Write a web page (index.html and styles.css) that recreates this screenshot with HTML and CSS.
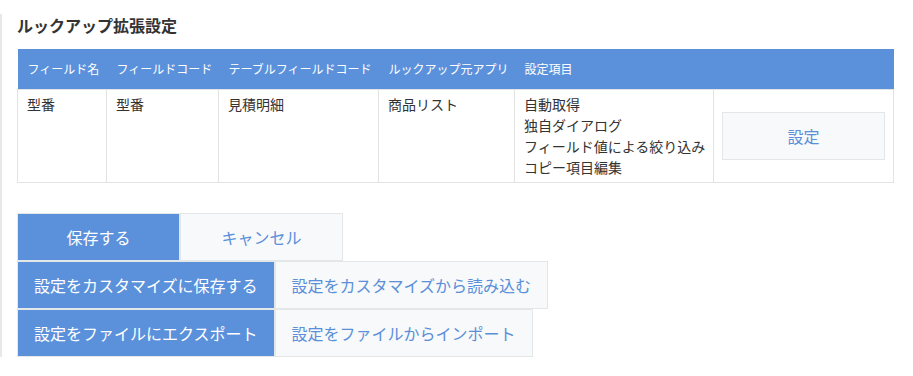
FILE: index.html
```html
<!DOCTYPE html>
<html lang="ja">
<head>
    <meta charset="UTF-8">
    <title>ルックアップ拡張設定</title>
    <link rel="stylesheet" href="styles.css">
</head>
<body>
    <div class="wrapper">
        <h2 class="title">ルックアップ拡張設定</h2>

        <table class="lookup-table">
            <thead>
                <tr>
                    <th class="col-name">フィールド名</th>
                    <th class="col-code">フィールドコード</th>
                    <th class="col-table">テーブルフィールドコード</th>
                    <th class="col-app">ルックアップ元アプリ</th>
                    <th class="col-items">設定項目</th>
                    <th class="col-action"></th>
                </tr>
            </thead>
            <tbody>
                <tr>
                    <td>型番</td>
                    <td>型番</td>
                    <td>見積明細</td>
                    <td>商品リスト</td>
                    <td>
                        <div>自動取得</div>
                        <div>独自ダイアログ</div>
                        <div>フィールド値による絞り込み</div>
                        <div>コピー項目編集</div>
                    </td>
                    <td class="cell-action">
                        <button class="btn-setting">設定</button>
                    </td>
                </tr>
            </tbody>
        </table>

        <div class="actions">
            <div class="btn-row">
                <button class="btn btn-primary">保存する</button>
                <button class="btn btn-normal">キャンセル</button>
            </div>
            <div class="btn-row">
                <button class="btn btn-primary">設定をカスタマイズに保存する</button>
                <button class="btn btn-normal">設定をカスタマイズから読み込む</button>
            </div>
            <div class="btn-row">
                <button class="btn btn-primary">設定をファイルにエクスポート</button>
                <button class="btn btn-normal">設定をファイルからインポート</button>
            </div>
        </div>
    </div>
</body>
</html>
```

FILE: styles.css
```css
* {
    box-sizing: border-box;
}

body {
    margin: 0;
    background-color: #ffffff;
    color: #333333;
    font-family: "Noto Sans CJK JP", "Noto Sans", sans-serif;
}

.wrapper {
    margin-top: 14px;
    border-left: 2px solid #e8e8e8;
    padding-left: 15px;
    width: 896px;
}

.title {
    margin: 0 0 14px;
    padding-top: 2px;
    font-size: 16px;
    line-height: 19px;
    font-weight: bold;
}

.lookup-table {
    width: 876px;
    border-collapse: collapse;
    table-layout: fixed;
}

.lookup-table th {
    height: 40px;
    padding: 0 10px;
    background-color: #5b91db;
    color: #ffffff;
    font-size: 12px;
    font-weight: normal;
    text-align: left;
    white-space: nowrap;
}

.col-name { width: 89px; }
.col-code { width: 112px; }
.col-table { width: 160px; }
.col-app { width: 136px; }
.col-items { width: 199px; }
.col-action { width: 180px; }

.lookup-table td {
    padding: 4px 9px;
    border: 1px solid #e3e3e3;
    font-size: 14px;
    line-height: 21px;
    vertical-align: top;
    white-space: nowrap;
}

.lookup-table td.cell-action {
    vertical-align: middle;
    padding: 0 8px;
}

.btn-setting {
    display: block;
    width: 163px;
    height: 48px;
    background-color: #f7f9fa;
    border: 1px solid #e3e7e8;
    color: #5b8fd9;
    font-family: inherit;
    font-size: 16px;
    cursor: pointer;
}

.actions {
    margin-top: 30px;
}

.btn-row {
    display: flex;
}

.btn {
    height: 48px;
    min-width: 163px;
    padding: 0 16px;
    border: 1px solid #e3e7e8;
    font-family: inherit;
    font-size: 16px;
    white-space: nowrap;
    cursor: pointer;
}

.btn-primary {
    background-color: #5b91db;
    color: #ffffff;
}

.btn-normal {
    background-color: #f7f9fa;
    color: #5b8fd9;
}
```
